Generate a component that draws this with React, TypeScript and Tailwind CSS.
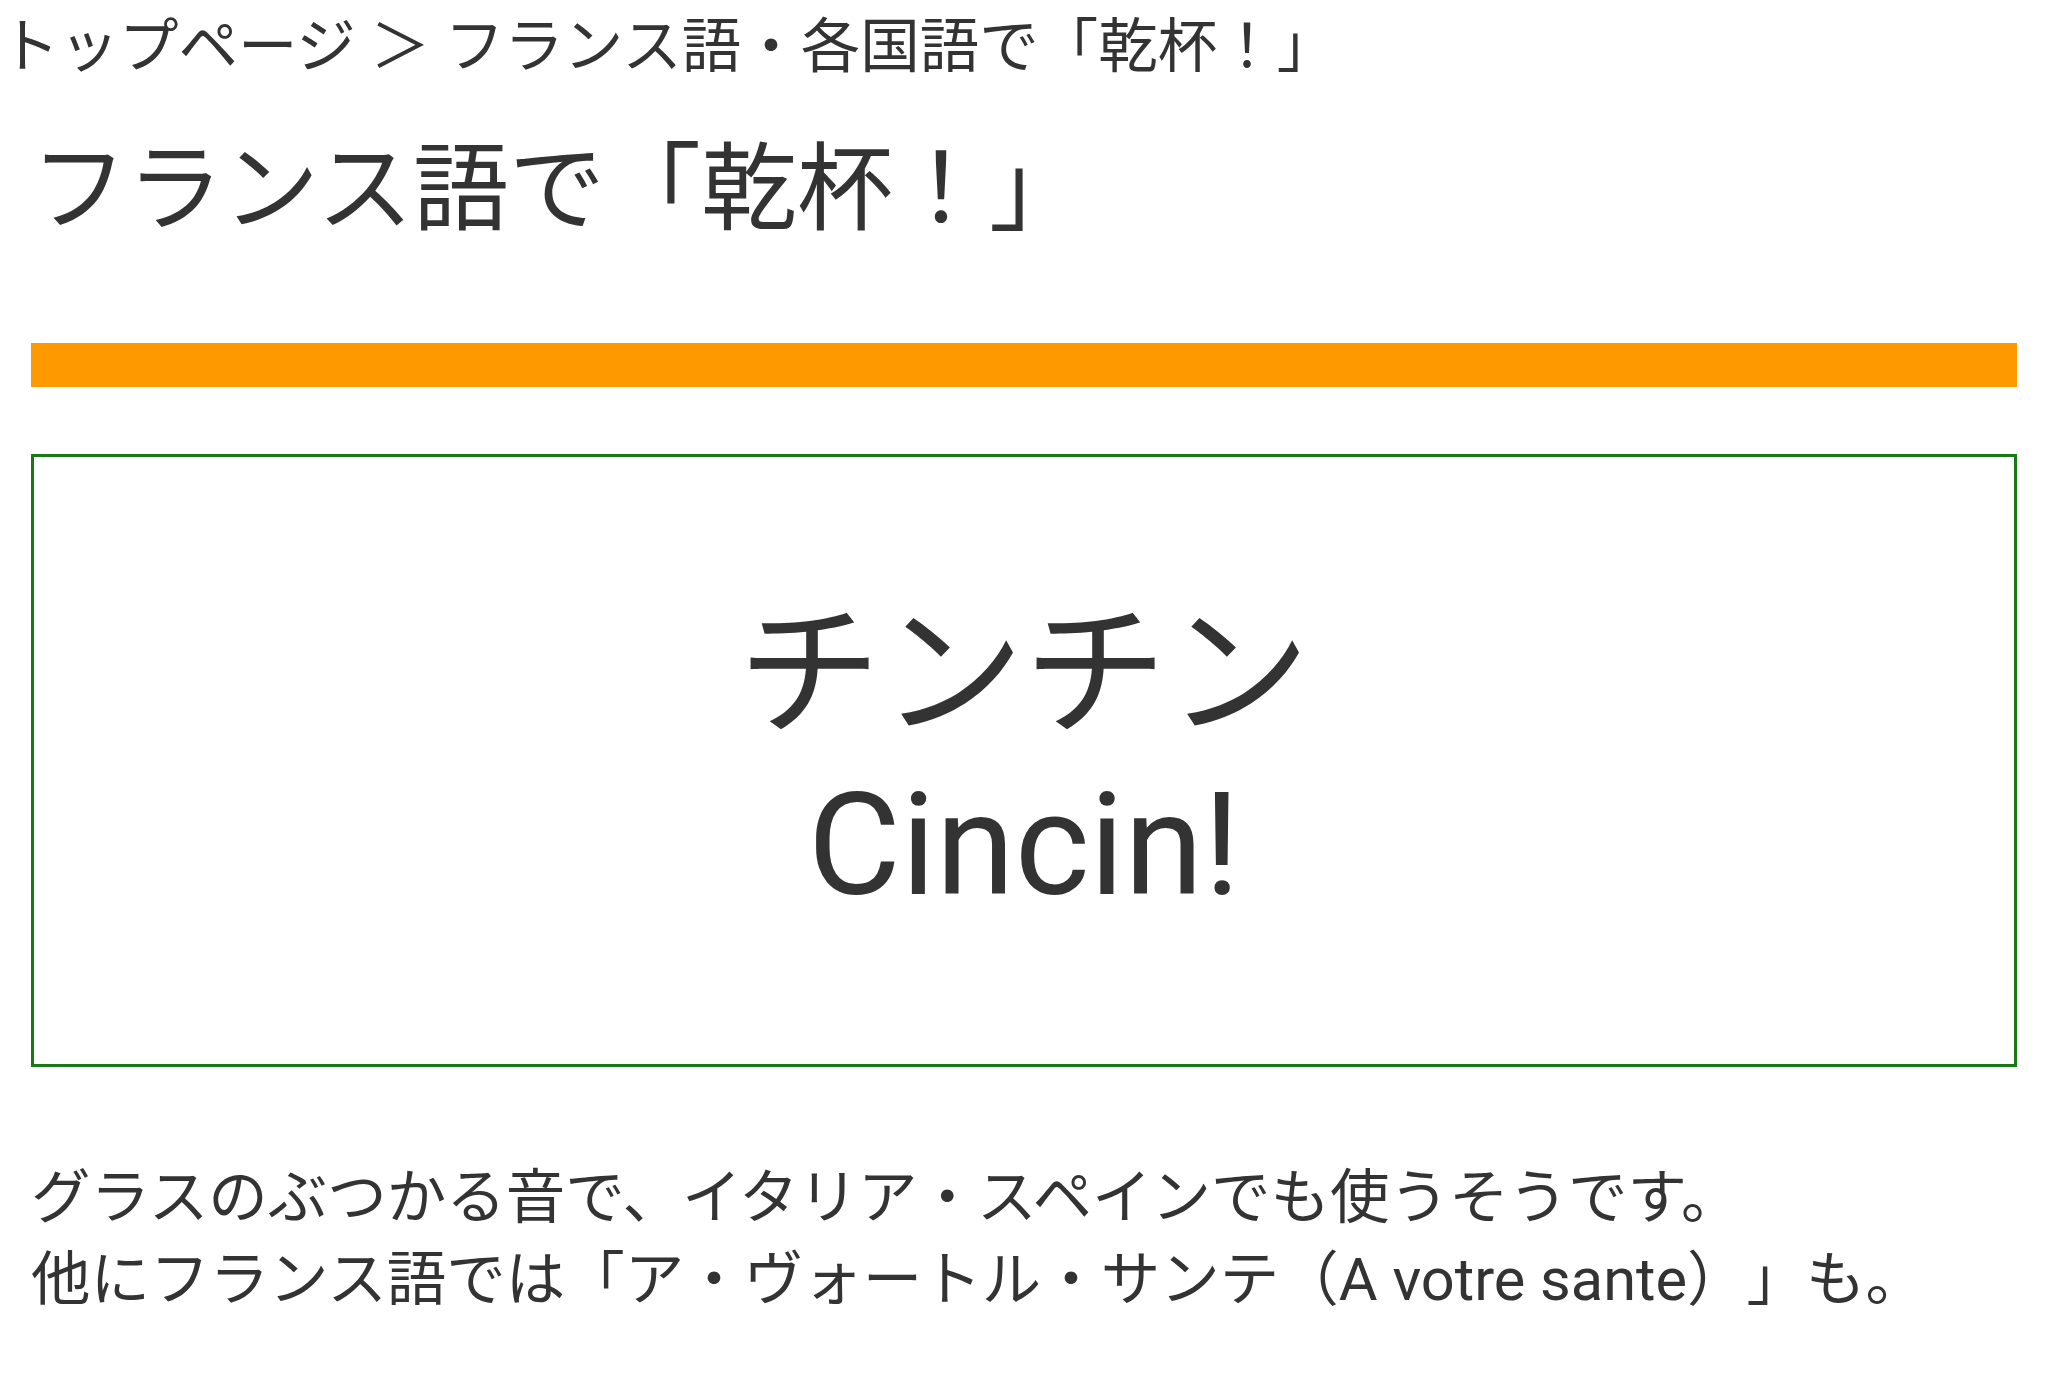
export default function App() {
  return (
    <div className="min-h-screen bg-white text-[#333333] font-['Roboto','Noto_Sans_CJK_JP',sans-serif] [text-spacing-trim:space-all]">
      <div className="text-[59.5px] leading-[94px] whitespace-nowrap">
        トップページ ＞ フランス語・各国語で「乾杯！」
      </div>

      <div className="px-[31px]">
        <h1 className="text-[96px] leading-[130px] font-normal mt-[30px] whitespace-nowrap">
          フランス語で「乾杯！」
        </h1>

        <div className="h-[44px] bg-[#ff9900] mt-[89px]" />

        <div className="mt-[67px] border-[3px] border-[#177a17] pt-[132px] pb-[133px] text-center text-[143px] leading-[171px]">
          <div>チンチン</div>
          <div>Cincin!</div>
        </div>

        <div className="mt-[90px] text-[59.5px] leading-[82px]">
          <p>グラスのぶつかる音で、イタリア・スペインでも使うそうです。</p>
          <p>他にフランス語では「ア・ヴォートル・サンテ（A votre sante）」も。</p>
        </div>
      </div>
    </div>
  );
}
